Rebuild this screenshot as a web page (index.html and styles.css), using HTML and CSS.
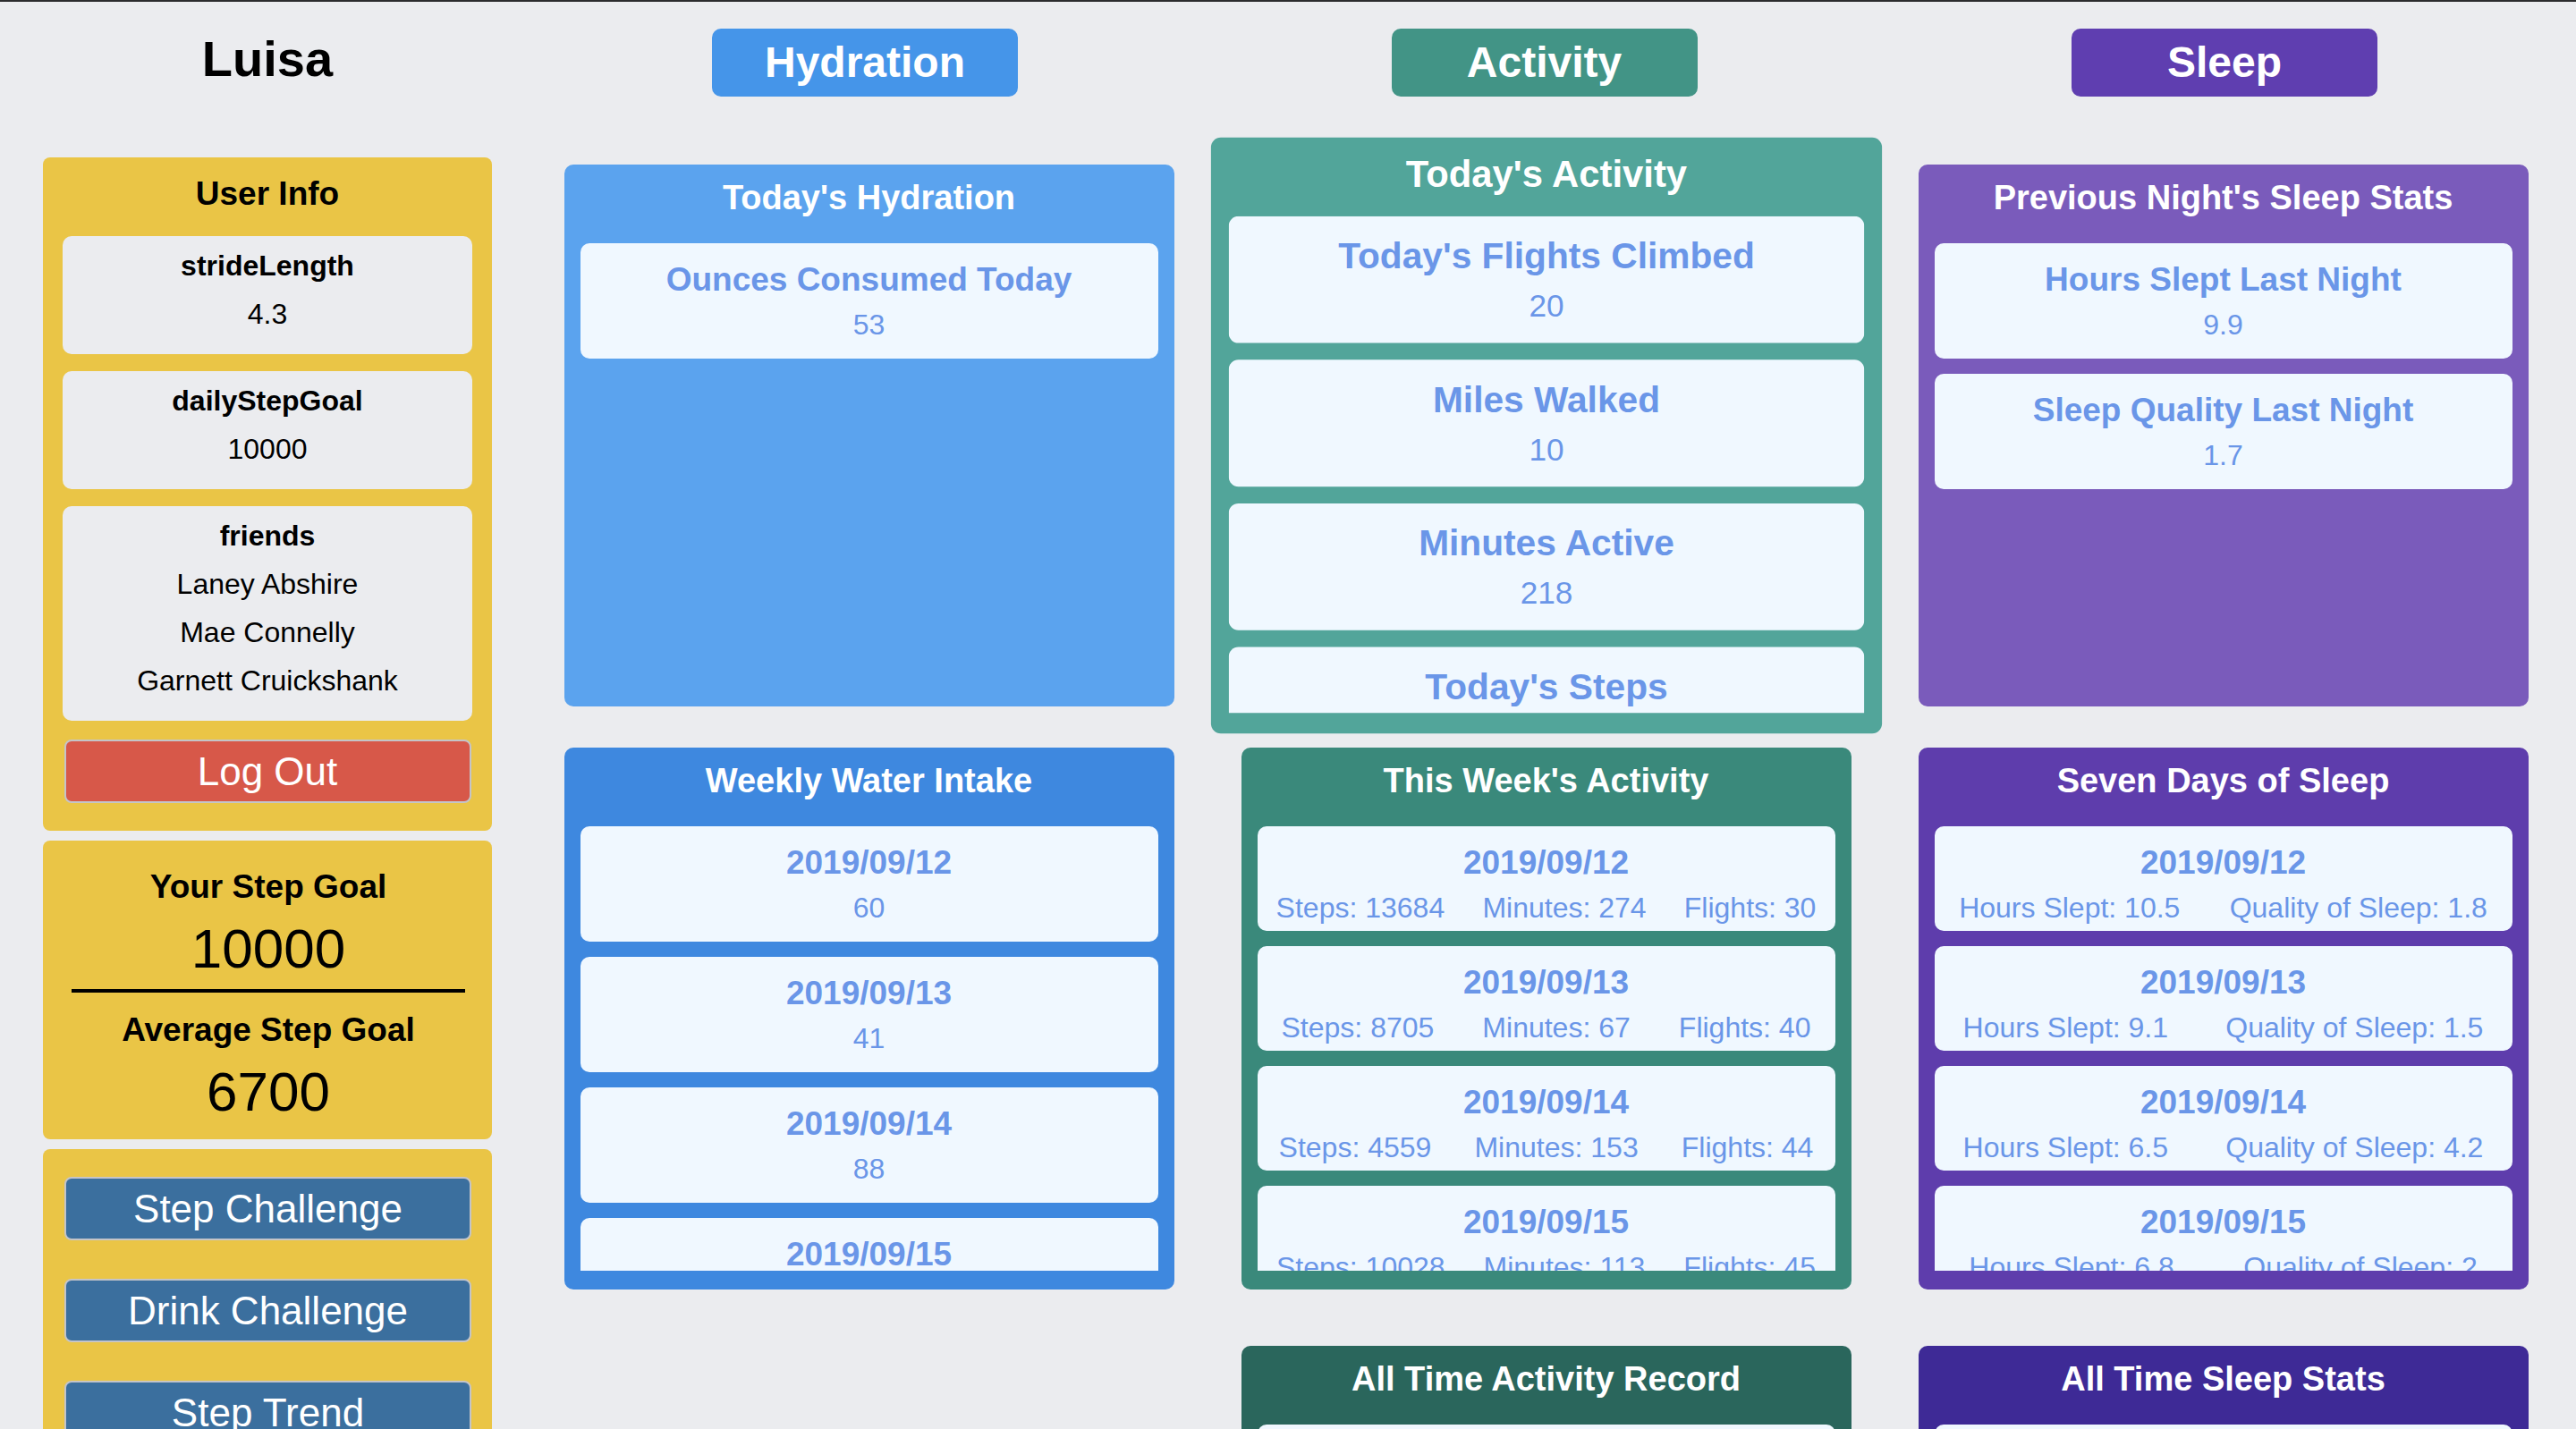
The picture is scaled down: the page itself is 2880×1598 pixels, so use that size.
FILE: index.html
```html
<!DOCTYPE html>
<html lang="en">
<head>
<meta charset="utf-8">
<title>Activity Tracker</title>
<link rel="stylesheet" href="styles.css">
</head>
<body>
<div class="app">
  <aside class="sidebar">
    <h1 class="user-name">Luisa</h1>

    <section class="side-panel user-info">
      <h2 class="side-panel__title">User Info</h2>
      <div class="info-list">
        <div class="info-card">
          <h3 class="info-card__label">strideLength</h3>
          <p class="info-card__value">4.3</p>
        </div>
        <div class="info-card">
          <h3 class="info-card__label">dailyStepGoal</h3>
          <p class="info-card__value">10000</p>
        </div>
        <div class="info-card">
          <h3 class="info-card__label">friends</h3>
          <p class="info-card__value">Laney Abshire</p>
          <p class="info-card__value">Mae Connelly</p>
          <p class="info-card__value">Garnett Cruickshank</p>
        </div>
      </div>
      <button class="btn btn--logout">Log Out</button>
    </section>

    <section class="side-panel step-goal">
      <h2 class="goal-label">Your Step Goal</h2>
      <p class="goal-value">10000</p>
      <hr class="goal-divider">
      <h2 class="goal-label goal-label--spaced">Average Step Goal</h2>
      <p class="goal-value">6700</p>
    </section>

    <section class="side-panel challenges">
      <button class="btn btn--challenge">Step Challenge</button>
      <button class="btn btn--challenge">Drink Challenge</button>
      <button class="btn btn--challenge">Step Trend</button>
    </section>
  </aside>

  <section class="column">
    <button class="column-tab column-tab--hydration">Hydration</button>
    <article class="panel panel--hydration-today">
      <h2 class="panel__title">Today's Hydration</h2>
      <div class="panel__list">
        <div class="stat-card">
          <h3 class="stat-card__title">Ounces Consumed Today</h3>
          <p class="stat-card__value">53</p>
        </div>
      </div>
    </article>
    <article class="panel panel--hydration-week">
      <h2 class="panel__title">Weekly Water Intake</h2>
      <div class="panel__list">
        <div class="stat-card"><h3 class="stat-card__title">2019/09/12</h3><p class="stat-card__value">60</p></div>
        <div class="stat-card"><h3 class="stat-card__title">2019/09/13</h3><p class="stat-card__value">41</p></div>
        <div class="stat-card"><h3 class="stat-card__title">2019/09/14</h3><p class="stat-card__value">88</p></div>
        <div class="stat-card"><h3 class="stat-card__title">2019/09/15</h3><p class="stat-card__value">72</p></div>
        <div class="stat-card"><h3 class="stat-card__title">2019/09/16</h3><p class="stat-card__value">35</p></div>
        <div class="stat-card"><h3 class="stat-card__title">2019/09/17</h3><p class="stat-card__value">64</p></div>
        <div class="stat-card"><h3 class="stat-card__title">2019/09/18</h3><p class="stat-card__value">53</p></div>
      </div>
    </article>
  </section>

  <section class="column">
    <button class="column-tab column-tab--activity">Activity</button>
    <article class="panel panel--activity-today panel--raised">
      <h2 class="panel__title">Today's Activity</h2>
      <div class="panel__list">
        <div class="stat-card"><h3 class="stat-card__title">Today's Flights Climbed</h3><p class="stat-card__value">20</p></div>
        <div class="stat-card"><h3 class="stat-card__title">Miles Walked</h3><p class="stat-card__value">10</p></div>
        <div class="stat-card"><h3 class="stat-card__title">Minutes Active</h3><p class="stat-card__value">218</p></div>
        <div class="stat-card"><h3 class="stat-card__title">Today's Steps</h3><p class="stat-card__value">11425</p></div>
      </div>
    </article>
    <article class="panel panel--activity-week">
      <h2 class="panel__title">This Week's Activity</h2>
      <div class="panel__list">
        <div class="stat-card stat-card--row"><h3 class="stat-card__title">2019/09/12</h3>
          <div class="stat-card__row"><span>Steps: 13684</span><span>Minutes: 274</span><span>Flights: 30</span></div></div>
        <div class="stat-card stat-card--row"><h3 class="stat-card__title">2019/09/13</h3>
          <div class="stat-card__row"><span>Steps: 8705</span><span>Minutes: 67</span><span>Flights: 40</span></div></div>
        <div class="stat-card stat-card--row"><h3 class="stat-card__title">2019/09/14</h3>
          <div class="stat-card__row"><span>Steps: 4559</span><span>Minutes: 153</span><span>Flights: 44</span></div></div>
        <div class="stat-card stat-card--row"><h3 class="stat-card__title">2019/09/15</h3>
          <div class="stat-card__row"><span>Steps: 10028</span><span>Minutes: 113</span><span>Flights: 45</span></div></div>
        <div class="stat-card stat-card--row"><h3 class="stat-card__title">2019/09/16</h3>
          <div class="stat-card__row"><span>Steps: 7280</span><span>Minutes: 96</span><span>Flights: 12</span></div></div>
      </div>
    </article>
    <article class="panel panel--activity-record panel--record">
      <h2 class="panel__title">All Time Activity Record</h2>
      <div class="panel__list">
        <div class="stat-card"><h3 class="stat-card__title">Most Steps</h3><p class="stat-card__value">14810</p></div>
      </div>
    </article>
  </section>

  <section class="column">
    <button class="column-tab column-tab--sleep">Sleep</button>
    <article class="panel panel--sleep-night">
      <h2 class="panel__title">Previous Night's Sleep Stats</h2>
      <div class="panel__list">
        <div class="stat-card"><h3 class="stat-card__title">Hours Slept Last Night</h3><p class="stat-card__value">9.9</p></div>
        <div class="stat-card"><h3 class="stat-card__title">Sleep Quality Last Night</h3><p class="stat-card__value">1.7</p></div>
      </div>
    </article>
    <article class="panel panel--sleep-week">
      <h2 class="panel__title">Seven Days of Sleep</h2>
      <div class="panel__list">
        <div class="stat-card stat-card--row"><h3 class="stat-card__title">2019/09/12</h3>
          <div class="stat-card__row"><span>Hours Slept: 10.5</span><span>Quality of Sleep: 1.8</span></div></div>
        <div class="stat-card stat-card--row"><h3 class="stat-card__title">2019/09/13</h3>
          <div class="stat-card__row"><span>Hours Slept: 9.1</span><span>Quality of Sleep: 1.5</span></div></div>
        <div class="stat-card stat-card--row"><h3 class="stat-card__title">2019/09/14</h3>
          <div class="stat-card__row"><span>Hours Slept: 6.5</span><span>Quality of Sleep: 4.2</span></div></div>
        <div class="stat-card stat-card--row"><h3 class="stat-card__title">2019/09/15</h3>
          <div class="stat-card__row"><span>Hours Slept: 6.8</span><span>Quality of Sleep: 2</span></div></div>
        <div class="stat-card stat-card--row"><h3 class="stat-card__title">2019/09/16</h3>
          <div class="stat-card__row"><span>Hours Slept: 7.4</span><span>Quality of Sleep: 3.3</span></div></div>
      </div>
    </article>
    <article class="panel panel--sleep-record panel--record">
      <h2 class="panel__title">All Time Sleep Stats</h2>
      <div class="panel__list">
        <div class="stat-card"><h3 class="stat-card__title">Average Hours Slept</h3><p class="stat-card__value">7.7</p></div>
      </div>
    </article>
  </section>
</div>
</body>
</html>
```

FILE: styles.css
```css
html, body {
  margin: 0;
  padding: 0;
}

body {
  border-top: 2px solid #2c2c2e;
  background: #ebecef;
  font-family: "Liberation Sans", Arial, Helvetica, sans-serif;
  color: #000;
  overflow: hidden;
}

.app {
  display: grid;
  grid-template-columns: 593px 757px 757px 757px;
  align-items: start;
}

/* ---------- Sidebar ---------- */
.sidebar {
  padding-left: 48px;
  display: flex;
  flex-direction: column;
}

.sidebar > * {
  width: 502px;
  box-sizing: border-box;
}

.user-name {
  margin: 32px 0 0;
  font-size: 56px;
  line-height: 64px;
  font-weight: 700;
  text-align: center;
}

.side-panel {
  background: #eac546;
  border-radius: 8px;
}

.user-info {
  margin-top: 78px;
  padding: 19px 22px 31px;
}

.side-panel__title {
  margin: 0 0 25px;
  font-size: 37px;
  line-height: 44px;
  font-weight: 700;
  text-align: center;
}

.info-list {
  display: flex;
  flex-direction: column;
  gap: 19px;
}

.info-card {
  background: #ebecef;
  border-radius: 10px;
  padding: 13px 0 25px;
  text-align: center;
}

.info-card__label {
  margin: 0;
  font-size: 32px;
  line-height: 40px;
  font-weight: 700;
}

.info-card__value {
  margin: 14px 0 0;
  font-size: 32px;
  line-height: 40px;
}

.btn {
  display: block;
  width: 455px;
  height: 71px;
  margin: 0 auto;
  padding: 0;
  border: 2px solid #c4c4c8;
  border-radius: 8px;
  color: #fff;
  font-family: "Liberation Sans", Arial, Helvetica, sans-serif;
  font-size: 44px;
  line-height: 67px;
  text-align: center;
  cursor: pointer;
}

.btn--logout {
  margin-top: 21px;
  background: #d75849;
}

.btn--challenge {
  background: #3b6f9e;
}

.step-goal {
  margin-top: 11px;
  padding: 30px 30px 18px 32px;
  text-align: center;
}

.goal-label {
  margin: 0;
  font-size: 37px;
  line-height: 44px;
  font-weight: 700;
}

.goal-label--spaced {
  margin-top: 20px;
}

.goal-value {
  margin: 12px 0 0;
  font-size: 62px;
  line-height: 70px;
}

.goal-divider {
  margin: 10px 0 0;
  height: 4px;
  border: 0;
  background: #000;
}

.challenges {
  margin-top: 11px;
  padding: 31px 23px 31px 24px;
  display: flex;
  flex-direction: column;
  gap: 43px;
}

/* ---------- Columns ---------- */
.column {
  display: flex;
  flex-direction: column;
  align-items: center;
  padding-top: 30px;
}

.column-tab {
  width: 342px;
  height: 76px;
  padding: 0;
  border: 0;
  border-radius: 10px;
  color: #fff;
  font-family: "Liberation Sans", Arial, Helvetica, sans-serif;
  font-size: 48px;
  line-height: 76px;
  font-weight: 700;
  cursor: pointer;
}

.column-tab--hydration { background: #4595e9; margin-right: 9px; }
.column-tab--activity  { background: #429486; margin-right: 4px; }
.column-tab--sleep     { background: #5f3eb0; margin-left: 3px; }

.panel {
  margin-top: 76px;
  width: 682px;
  height: 606px;
  box-sizing: border-box;
  padding: 14px 18px 21px;
  border-radius: 10px;
  display: flex;
  flex-direction: column;
}

.panel + .panel {
  margin-top: 46px;
}

.panel + .panel--record {
  margin-top: 63px;
}

.panel--raised {
  transform: scale(1.1);
  position: relative;
  z-index: 1;
}

.panel--hydration-today { background: #5ba3ee; }
.panel--hydration-week  { background: #3e88df; }
.panel--activity-today  { background: #52a59a; }
.panel--activity-week   { background: #3a897b; }
.panel--activity-record { background: #2a665c; }
.panel--sleep-night     { background: #7a5bbb; }
.panel--sleep-week      { background: #5e3dac; }
.panel--sleep-record    { background: #3e2a96; }

.panel__title {
  margin: 0 0 28px;
  color: #fff;
  font-size: 38px;
  line-height: 46px;
  font-weight: 700;
  text-align: center;
  flex-shrink: 0;
}

.panel--activity-today .panel__title {
  margin-bottom: 20px;
}

.panel__list {
  flex: 1;
  min-height: 0;
  overflow: hidden;
  display: flex;
  flex-direction: column;
  gap: 17px;
}

.stat-card {
  flex-shrink: 0;
  background: #f0f8ff;
  border-radius: 10px;
  padding: 19px 0;
  text-align: center;
  color: #6a96e8;
}

.stat-card--row {
  padding-bottom: 7px;
}

.stat-card__title {
  margin: 0 0 9px;
  font-size: 37px;
  line-height: 44px;
  font-weight: 700;
}

.stat-card__value {
  margin: 0;
  font-size: 32px;
  line-height: 38px;
}

.stat-card__row {
  display: flex;
  justify-content: space-around;
  font-size: 32px;
  line-height: 38px;
}
```
